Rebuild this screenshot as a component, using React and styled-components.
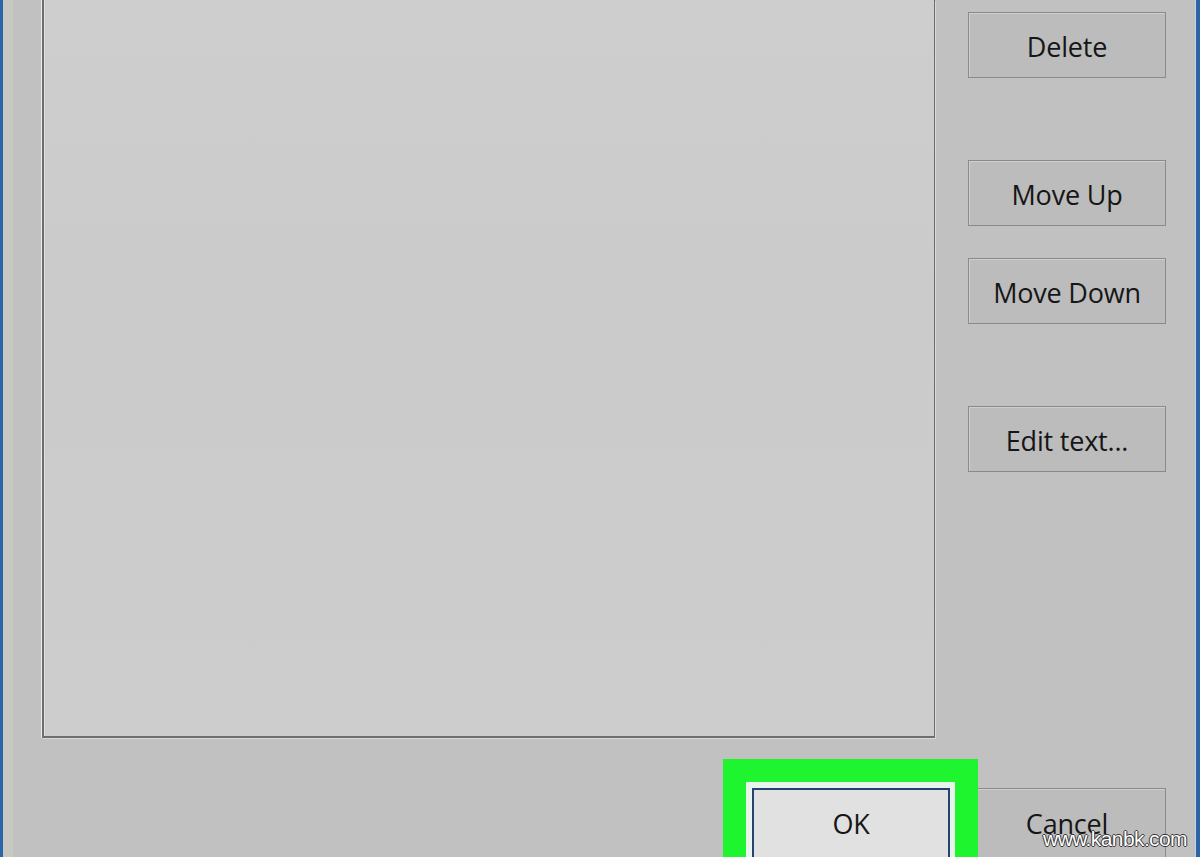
import React from "react";
import styled, { createGlobalStyle } from "styled-components";

const Global = createGlobalStyle`
  html, body { margin: 0; padding: 0; background: #c0c0c0; }
  body { font-family: "Open Sans", "Noto Sans", sans-serif; }
`;

const Window = styled.div`
  position: relative;
  box-sizing: border-box;
  width: 1200px;
  height: 857px;
  overflow: hidden;
  background: #c1c1c1;
  border-left: 3px solid #2c64a8;
  border-right: 4px solid #2c64a8;
  display: flex;
  flex-direction: column;
`;

const Body = styled.div`
  flex: 1;
  display: flex;
  flex-direction: column;
  border-left: 10px solid #c8c8c2;
  border-right: 1px solid #c4d6e2;
`;

const Main = styled.div`
  display: flex;
  align-items: flex-start;
`;

const ListBox = styled.div`
  box-sizing: border-box;
  margin-left: 29px;
  width: 893px;
  height: 738px;
  background: linear-gradient(#cecece, #cbcbcb 40%, #cdcdcd);
  border-left: 2px solid #6e6e6e;
  border-bottom: 2px solid #6e6e6e;
  border-right: 1px solid #6e6e6e;
  box-shadow: -1px 0 0 #ececec, 1px 1px 0 #d8d8d8, inset 1px 0 0 #dedede;
`;

const ButtonColumn = styled.div`
  display: flex;
  flex-direction: column;
  margin-left: 33px;
  padding-top: 12px;
`;

const Gap = styled.div`
  height: ${(p) => p.$h}px;
`;

const Button = styled.div`
  box-sizing: border-box;
  width: 198px;
  height: 66px;
  display: flex;
  align-items: center;
  justify-content: center;
  padding-top: 2px;
  background: #bcbcbc;
  border: 1px solid #8a8a8a;
  box-shadow: inset 1px 1px 0 #cfcfcf;
  color: #161616;
  font-size: 27px;
  letter-spacing: -0.2px;
`;

const Footer = styled.div`
  flex: 1;
  display: flex;
  justify-content: flex-end;
  align-items: flex-start;
  padding-top: 50px;
  padding-right: 29px;
  gap: 18px;
`;

const Highlighted = styled.div`
  position: relative;
  z-index: 1;
  &::before {
    content: "";
    position: absolute;
    top: -29px;
    left: -29px;
    right: -28px;
    bottom: -40px;
    border: 23px solid #1ef52f;
    box-shadow: inset 0 0 0 6px #e9f4ee;
  }
`;

const OkButton = styled(Button)`
  position: relative;
  height: 80px;
  padding-bottom: 12px;
  background: #e1e1e1;
  border: 2px solid #23446f;
  box-shadow: none;
`;

const CancelButton = styled(Button)`
  height: 80px;
  padding-bottom: 12px;
`;

const Watermark = styled.div`
  position: absolute;
  right: 9px;
  bottom: 6px;
  z-index: 2;
  font-family: "Liberation Sans", Arial, sans-serif;
  font-size: 21px;
  color: #ffffff;
  letter-spacing: -0.6px;
  text-shadow: 1px 0 0 #333, -1px 0 0 #333, 0 1px 0 #333, 0 -1px 0 #333;
`;

export default function App() {
  return (
    <>
      <Global />
      <Window>
        <Body>
          <Main>
            <ListBox />
            <ButtonColumn>
              <Button>Delete</Button>
              <Gap $h={82} />
              <Button>Move Up</Button>
              <Gap $h={32} />
              <Button>Move Down</Button>
              <Gap $h={82} />
              <Button>Edit text...</Button>
            </ButtonColumn>
          </Main>
          <Footer>
            <Highlighted>
              <OkButton>OK</OkButton>
            </Highlighted>
            <CancelButton>Cancel</CancelButton>
          </Footer>
        </Body>
        <Watermark>www.kanbk.com</Watermark>
      </Window>
    </>
  );
}
